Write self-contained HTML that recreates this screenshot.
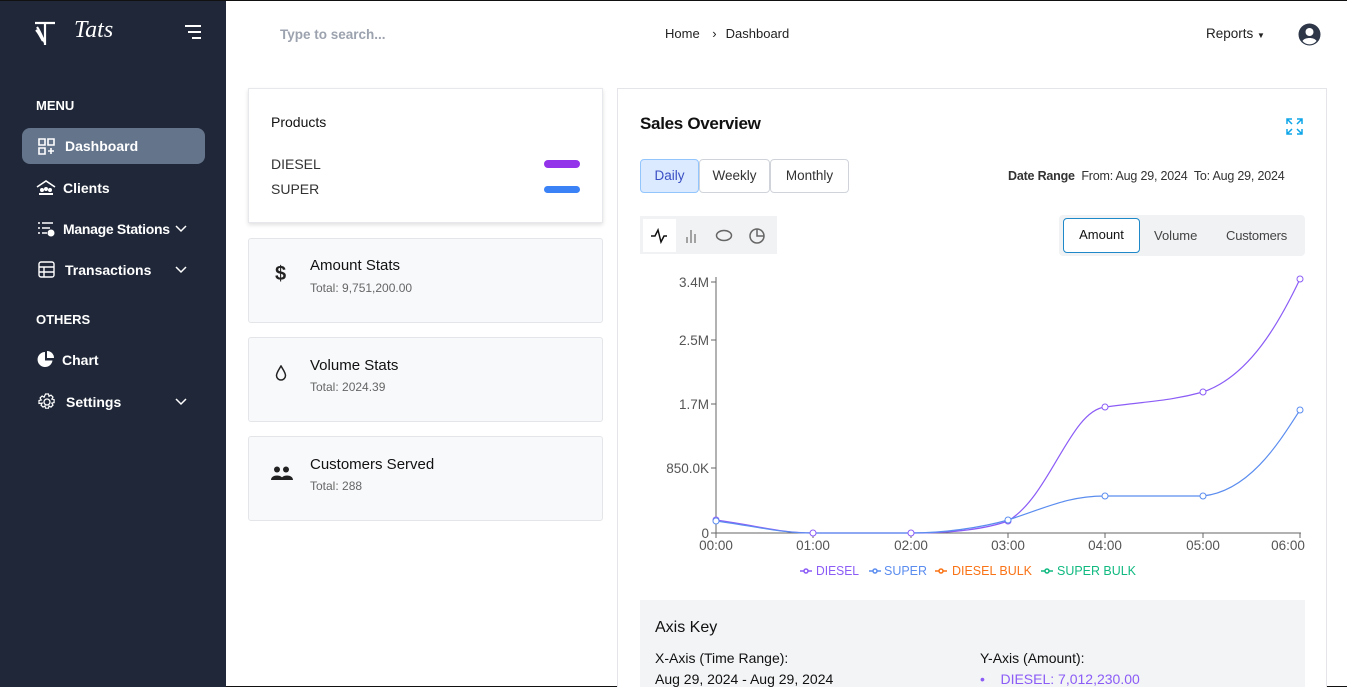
<!DOCTYPE html><html><head><style>
*{box-sizing:border-box;margin:0;padding:0}
html,body{overflow:hidden}
body{width:1347px;height:687px;font-family:"Liberation Sans",sans-serif;background:#fff;position:relative;border-top:1px solid #111;border-bottom:1px solid #111}
.sb{position:absolute;left:0;top:0;width:226px;height:687px;background:#1f2738;color:#fff}
.sb .t{position:absolute;font-size:14px;font-weight:bold}
.abs{position:absolute}
.card{position:absolute;border:1px solid #e3e5e8;border-radius:3px;background:#f8f9fb}
.btn{position:absolute;border:1px solid #d0d4da;border-radius:4px;font-size:13.5px;color:#333;text-align:center;line-height:32px;height:34px}
</style></head><body>
<div class="sb">
<svg class="abs" style="left:34px;top:20px" width="22" height="26" viewBox="0 0 22 26"><path d="M1 2h20M11 2v22M3 6c3 4 5 10 8 16M2 9c3 3 5 8 7 11" stroke="#fff" stroke-width="2.2" fill="none"/></svg>
<div class="abs" style="left:74px;top:16px;font-family:'Liberation Serif',serif;font-style:italic;font-size:24px">Tats</div>
<svg class="abs" style="left:185px;top:24px" width="17" height="14"><path d="M0 1h16M3 7h13M7 13h9" stroke="#fff" stroke-width="2"/></svg>
<div class="t" style="left:36px;top:97px;font-size:13px">MENU</div>
<div class="abs" style="left:22px;top:127px;width:183px;height:36px;background:#64748b;border-radius:8px"></div>
<svg class="abs" style="left:38px;top:137px" width="17" height="17"><path d="M1 1h6v6H1zM10 1h6v6h-6zM1 10h6v6H1zM13 10v6M10 13h6" stroke="#fff" stroke-width="1.6" fill="none"/></svg>
<div class="t" style="left:65px;top:137px">Dashboard</div>
<svg class="abs" style="left:36px;top:178px" width="20" height="17"><path d="M1 8L10 2l9 6" stroke="#fff" stroke-width="1.6" fill="none"/><circle cx="6" cy="11" r="2" fill="#fff"/><circle cx="10" cy="10" r="2" fill="#fff"/><circle cx="14" cy="11" r="2" fill="#fff"/><path d="M3 16h14v-2H3z" fill="#fff"/></svg>
<div class="t" style="left:63px;top:179px">Clients</div>
<svg class="abs" style="left:37px;top:220px" width="19" height="16"><path d="M1 2h2M5 2h11M1 7h2M5 7h8M1 12h2M5 12h5" stroke="#fff" stroke-width="1.6"/><circle cx="14" cy="12" r="3.5" fill="#fff"/></svg>
<div class="t" style="left:63px;top:220px;letter-spacing:-0.3px">Manage Stations</div>
<svg class="abs" style="left:175px;top:224px" width="12" height="8"><path d="M1 1l5 5 5-5" stroke="#fff" stroke-width="1.5" fill="none"/></svg>
<svg class="abs" style="left:38px;top:260px" width="17" height="17"><rect x="1" y="1" width="15" height="15" rx="2" stroke="#fff" stroke-width="1.4" fill="none"/><path d="M1 6h15M1 11h15M6 6v10" stroke="#fff" stroke-width="1.4"/></svg>
<div class="t" style="left:65px;top:261px">Transactions</div>
<svg class="abs" style="left:175px;top:265px" width="12" height="8"><path d="M1 1l5 5 5-5" stroke="#fff" stroke-width="1.5" fill="none"/></svg>
<div class="t" style="left:36px;top:311px;font-size:13px">OTHERS</div>
<svg class="abs" style="left:37px;top:350px" width="17" height="17"><path d="M8 1a7.5 7.5 0 1 0 7.5 8.5H8z" fill="#fff"/><path d="M10 0a7 7 0 0 1 7 7h-7z" fill="#fff"/></svg>
<div class="t" style="left:62px;top:351px">Chart</div>
<svg class="abs" style="left:38px;top:392px" width="18" height="18" viewBox="0 0 18 18"><circle cx="9" cy="9" r="3" stroke="#fff" stroke-width="1.3" fill="none"/><path d="M7.5 1h3l.5 2.3 2-1.2 2 2-1.2 2 2.3.5v3l-2.3.5 1.2 2-2 2-2-1.2-.5 2.3h-3l-.5-2.3-2 1.2-2-2 1.2-2L1 10.5v-3l2.3-.5-1.2-2 2-2 2 1.2z" stroke="#fff" stroke-width="1.2" fill="none"/></svg>
<div class="t" style="left:66px;top:393px">Settings</div>
<svg class="abs" style="left:175px;top:397px" width="12" height="8"><path d="M1 1l5 5 5-5" stroke="#fff" stroke-width="1.5" fill="none"/></svg>
</div>

<div class="abs" style="left:280px;top:26px;font-size:13.5px;color:#9ca3af;font-weight:bold">Type to search...</div>
<div class="abs" style="left:665px;top:25px;font-size:13px;color:#222">Home <span style="margin:0 9px">›</span>Dashboard</div>
<div class="abs" style="left:1206px;top:25px;font-size:13.5px;color:#222">Reports <span style="font-size:8px">▼</span></div>
<svg class="abs" style="left:1298px;top:22px" width="23" height="23"><circle cx="11.5" cy="11.5" r="11" fill="#2d3748"/><circle cx="11.5" cy="9" r="4" fill="#fff"/><path d="M4.5 18c2-4 12-4 14 0a9 9 0 0 1-14 0z" fill="#fff"/></svg>

<div class="abs" style="left:248px;top:87px;width:355px;height:135px;border:1px solid #e6e8eb;box-shadow:0 2px 4px rgba(0,0,0,.12);background:#fff">
<div class="abs" style="left:22px;top:25px;font-size:14px;color:#111">Products</div>
<div class="abs" style="left:22px;top:67px;font-size:14px;color:#333">DIESEL</div>
<div class="abs" style="left:295px;top:71px;width:36px;height:8px;background:#9333ea;border-radius:4px"></div>
<div class="abs" style="left:22px;top:92px;font-size:14px;color:#333">SUPER</div>
<div class="abs" style="left:295px;top:97px;width:36px;height:7px;background:#3b82f6;border-radius:4px"></div>
</div>

<div class="card" style="left:248px;top:237px;width:355px;height:85px"></div>
<div class="abs" style="left:275px;top:262px;font-size:20px;font-weight:bold;color:#222">$</div>
<div class="abs" style="left:310px;top:256px;font-size:15px;color:#111">Amount Stats</div>
<div class="abs" style="left:310px;top:280px;font-size:12px;color:#666">Total: 9,751,200.00</div>

<div class="card" style="left:248px;top:336px;width:355px;height:85px"></div>
<svg class="abs" style="left:275px;top:364px" width="12" height="16"><path d="M6 1C3 6 1.5 8 1.5 10.5a4.5 4.5 0 0 0 9 0C10.5 8 9 6 6 1z" stroke="#222" stroke-width="1.5" fill="none"/></svg>
<div class="abs" style="left:310px;top:356px;font-size:15px;color:#111">Volume Stats</div>
<div class="abs" style="left:310px;top:379px;font-size:12px;color:#666">Total: 2024.39</div>

<div class="card" style="left:248px;top:435px;width:355px;height:85px"></div>
<svg class="abs" style="left:271px;top:465px" width="22" height="15"><circle cx="6" cy="3.5" r="3" fill="#222"/><circle cx="15" cy="3.5" r="3" fill="#222"/><path d="M0 14c0-6 12-6 12 0zM10 14c0-6 12-6 12 0z" fill="#222"/></svg>
<div class="abs" style="left:310px;top:455px;font-size:15px;color:#111">Customers Served</div>
<div class="abs" style="left:310px;top:478px;font-size:12px;color:#666">Total: 288</div>

<div class="abs" style="left:617px;top:87px;width:710px;height:605px;border:1px solid #e3e5e8;background:#fff"></div>
<div class="abs" style="left:640px;top:113px;font-size:17px;font-weight:bold;color:#111;letter-spacing:-0.3px">Sales Overview</div>
<svg class="abs" style="left:1286px;top:117px" width="17" height="17"><path d="M1 6V1h5M1 1l5 5M16 6V1h-5M16 1l-5 5M1 11v5h5M1 16l5-5M16 11v5h-5M16 16l-5-5" stroke="#0ea5e9" stroke-width="1.5" fill="none"/></svg>
<div class="btn" style="left:640px;top:158px;width:59px;background:#dbeafe;border-color:#93c5fd;color:#3b4fc4">Daily</div>
<div class="btn" style="left:699px;top:158px;width:71px">Weekly</div>
<div class="btn" style="left:770px;top:158px;width:79px">Monthly</div>
<div class="abs" style="left:1008px;top:168px;font-size:12.5px;color:#333;letter-spacing:-0.2px"><b>Date Range</b>&nbsp; From: Aug 29, 2024&nbsp; To: Aug 29, 2024</div>

<div class="abs" style="left:640px;top:215px;width:137px;height:38px;background:#f1f2f4"></div>
<div class="abs" style="left:643px;top:218px;width:33px;height:33px;background:#fff"></div>
<svg class="abs" style="left:650px;top:226px" width="120" height="18"><path d="M1 9h4l3-6 3 12 3-6h3" stroke="#111" stroke-width="1.5" fill="none"/><path d="M37 16v-6M41 16V3M45 16v-9" stroke="#777" stroke-width="1.3"/><ellipse cx="74" cy="8.5" rx="7.5" ry="5" stroke="#666" stroke-width="1.5" fill="none"/><circle cx="107" cy="9" r="7" stroke="#666" stroke-width="1.5" fill="none"/><path d="M107 2v7h7" stroke="#666" stroke-width="1.5" fill="none"/></svg>

<div class="abs" style="left:1059px;top:214px;width:246px;height:41px;background:#f1f2f4;border-radius:4px"></div>
<div class="btn" style="left:1063px;top:217px;width:77px;height:35px;background:#fff;border-color:#1e88c8;color:#111;font-size:13px">Amount</div>
<div class="abs" style="left:1154px;top:227px;font-size:13px;color:#444">Volume</div>
<div class="abs" style="left:1226px;top:227px;font-size:13px;color:#444;letter-spacing:-0.2px">Customers</div>

<svg class="abs" style="left:640px;top:265px" width="680" height="320" viewBox="640 265 680 320" font-family="Liberation Sans" font-size="13.5" fill="#555">
<path d="M716 276V532H1301" stroke="#666" fill="none"/>
<g stroke="#666"><path d="M711 281h5M711 339h5M711 403h5M711 467h5M711 532h5M716 532v5M813 532v5M911 532v5M1008 532v5M1105 532v5M1203 532v5M1300 532v5"/></g>
<g text-anchor="end"><text x="709" y="286">3.4M</text><text x="709" y="344">2.5M</text><text x="709" y="408">1.7M</text><text x="709" y="472">850.0K</text><text x="709" y="537">0</text></g>
<g text-anchor="middle"><text x="716" y="549">00:00</text><text x="813" y="549">01:00</text><text x="911" y="549">02:00</text><text x="1008" y="549">03:00</text><text x="1105" y="549">04:00</text><text x="1203" y="549">05:00</text><text x="1288" y="549">06:00</text></g>
<path d="M716 519C760 525 780 532 813 532S880 532 911 532S980 530 1008 520C1050 495 1070 410 1105 406C1150 400 1170 400 1203 391C1250 375 1280 320 1300 278" stroke="#8b5cf6" stroke-width="1.2" fill="none"/>
<path d="M716 520C760 526 780 532 813 532S880 532 911 532S980 527 1008 519C1050 505 1070 495 1105 495L1203 495C1250 490 1280 440 1300 409" stroke="#5b8def" stroke-width="1.2" fill="none"/>
<g fill="#fff" stroke="#8b5cf6"><circle cx="716" cy="519" r="3"/><circle cx="813" cy="532" r="3"/><circle cx="911" cy="532" r="3"/><circle cx="1008" cy="520" r="3"/><circle cx="1105" cy="406" r="3"/><circle cx="1203" cy="391" r="3"/><circle cx="1300" cy="278" r="3"/></g>
<g fill="#fff" stroke="#5b8def"><circle cx="716" cy="520" r="3"/><circle cx="1008" cy="519" r="3"/><circle cx="1105" cy="495" r="3"/><circle cx="1203" cy="495" r="3"/><circle cx="1300" cy="409" r="3"/></g>
<g font-size="13"><text x="816" y="574" fill="#8b5cf6" textLength="43" lengthAdjust="spacingAndGlyphs">DIESEL</text><text x="884" y="574" fill="#5b8def" textLength="43" lengthAdjust="spacingAndGlyphs">SUPER</text><text x="952" y="574" fill="#f97316" textLength="80" lengthAdjust="spacingAndGlyphs">DIESEL BULK</text><text x="1057" y="574" fill="#10b981" textLength="79" lengthAdjust="spacingAndGlyphs">SUPER BULK</text></g>
<g stroke-width="1.5" fill="#fff"><path d="M800 570h12" stroke="#8b5cf6"/><circle cx="806" cy="570" r="2" stroke="#8b5cf6"/><path d="M869 570h12" stroke="#5b8def"/><circle cx="875" cy="570" r="2" stroke="#5b8def"/><path d="M935 570h12" stroke="#f97316"/><circle cx="941" cy="570" r="2" stroke="#f97316"/><path d="M1041 570h12" stroke="#10b981"/><circle cx="1047" cy="570" r="2" stroke="#10b981"/></g>
</svg>

<div class="abs" style="left:640px;top:599px;width:665px;height:90px;background:#f3f4f6"></div>
<div class="abs" style="left:655px;top:618px;font-size:16px;color:#111">Axis Key</div>
<div class="abs" style="left:655px;top:649px;font-size:14px;color:#111">X-Axis (Time Range):</div>
<div class="abs" style="left:655px;top:670px;font-size:14px;color:#111">Aug 29, 2024 - Aug 29, 2024</div>
<div class="abs" style="left:980px;top:649px;font-size:14px;color:#111">Y-Axis (Amount):</div>
<div class="abs" style="left:980px;top:670px;font-size:14px;color:#8b5cf6">•&nbsp;&nbsp;&nbsp; DIESEL: 7,012,230.00</div>
</body></html>
